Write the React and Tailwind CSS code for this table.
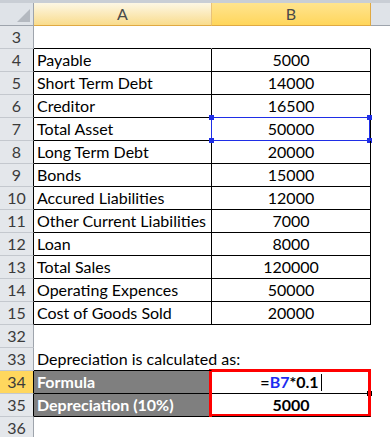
const rows = [
  { n: 3 },
  { n: 4, a: "Payable", b: "5000", t: true },
  { n: 5, a: "Short Term Debt", b: "14000", t: true },
  { n: 6, a: "Creditor", b: "16500", t: true },
  { n: 7, a: "Total Asset", b: "50000", t: true, sel: true },
  { n: 8, a: "Long Term Debt", b: "20000", t: true },
  { n: 9, a: "Bonds", b: "15000", t: true },
  { n: 10, a: "Accured Liabilities", b: "12000", t: true },
  { n: 11, a: "Other Current Liabilities", b: "7000", t: true },
  { n: 12, a: "Loan", b: "8000", t: true },
  { n: 13, a: "Total Sales", b: "120000", t: true },
  { n: 14, a: "Operating Expences", b: "50000", t: true },
  { n: 15, a: "Cost of Goods Sold", b: "20000", t: true },
  { n: 32 },
  { n: 33, a: "Depreciation is calculated as:" },
  { n: 34, a: "Formula", dark: true, formula: true },
  { n: 35, a: "Depreciation (10%)", b: "5000", dark: true },
  { n: 36 },
];

const Handle = ({ className }) => (
  <div className={`absolute w-[5px] h-[5px] bg-[#1f2ee6] ${className}`} />
);

const Row = ({ r }) => {
  const lineA = r.t || r.n === 3 || r.n === 33 || r.dark;
  const lineB = r.t || r.n === 3 || r.dark;
  return (
    <div className="flex h-[23px]">
      <div
        className={`w-[34px] shrink-0 border-b border-r border-b-[#c4c8ce] flex items-center justify-center text-[16px] text-[#3b3b3b] ${
          r.formula ? "bg-[#ffd75e] border-r-[#e0a942]" : "bg-[#e4e7eb]"
        } ${r.t || r.dark ? "border-r-black" : r.formula ? "" : "border-r-[#9ea4ac]"}`}
      >
        {r.n}
      </div>
      <div
        className={`w-[178px] shrink-0 border-b border-r pl-[3px] flex items-center whitespace-nowrap text-[16px] ${
          lineA ? "border-b-black" : "border-b-transparent"
        } ${r.t || r.dark ? "border-r-black" : "border-r-transparent"} ${
          r.dark ? "bg-[#7f7f7f] text-white font-bold" : "text-black"
        } ${r.n === 33 ? "overflow-visible z-10" : "overflow-hidden"}`}
      >
        {r.a}
      </div>
      <div
        className={`relative w-[159px] shrink-0 border-b border-r flex items-center justify-center text-[16px] text-black ${
          lineB ? "border-b-black" : "border-b-transparent"
        } ${r.t ? "border-r-black" : "border-r-transparent"} ${r.dark ? "font-bold" : ""}`}
      >
        {r.formula ? (
          <span className="flex items-center">
            =<span className="text-[#1c2cf0]">B7</span>*0.1
            <span className="ml-[2px] w-px h-[17px] bg-black" />
          </span>
        ) : (
          r.b
        )}
        {r.sel && (
          <div className="absolute left-[-1px] top-[-1px] w-[159px] h-[24px] border border-[#1f2ee6]">
            <Handle className="left-[-3px] top-[-3px]" />
            <Handle className="right-[-3px] top-[-3px]" />
            <Handle className="left-[-3px] bottom-[-3px]" />
            <Handle className="right-[-3px] bottom-[-3px]" />
          </div>
        )}
        {r.formula && (
          <>
            <div className="absolute right-[-2px] top-[20px] w-[5px] h-[5px] bg-black" />
            <div className="absolute left-[-3px] top-[-2px] w-[162px] h-[48px] border-[3px] border-[#ff0000]" />
          </>
        )}
      </div>
      <div className="flex-1" />
    </div>
  );
};

export default function App() {
  return (
    <div
      className="w-[390px] h-[437px] overflow-hidden bg-white"
      style={{ fontFamily: "Lato, 'Noto Sans', sans-serif" }}
    >
      <div className="h-[3px] bg-[#c9ced5]" />
      <div className="flex h-[23px]">
        <div className="relative w-[34px] shrink-0 bg-[#dfe3e8] border-b border-r border-[#9ea4ac]">
          <div className="absolute right-[3px] bottom-[3px] w-0 h-0 border-l-[13px] border-l-transparent border-b-[13px] border-b-[#b4b9c0]" />
        </div>
        <div className="w-[178px] shrink-0 border-b border-r border-b-[#e0a942] border-r-[#e8c27a] bg-gradient-to-b from-[#fdf7e4] to-[#f9dc8c] flex items-center justify-center text-[16px] text-[#4a4a4a]">
          A
        </div>
        <div className="w-[159px] shrink-0 border-b border-r border-[#e0a942] bg-gradient-to-b from-[#ffe48e] to-[#ffd65a] flex items-center justify-center text-[16px] text-[#4a4a4a]">
          B
        </div>
        <div className="flex-1 bg-[#dfe3e8] border-b border-[#9ea4ac]" />
      </div>
      {rows.map((r) => (
        <Row key={r.n} r={r} />
      ))}
    </div>
  );
}
